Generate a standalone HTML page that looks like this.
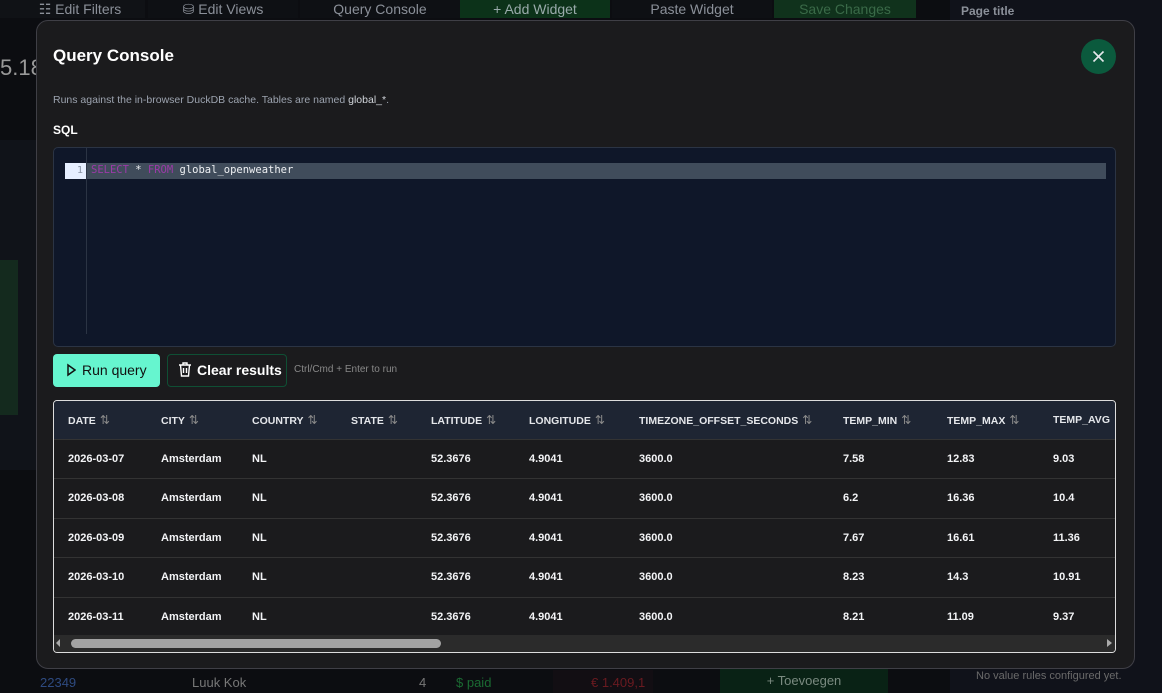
<!DOCTYPE html>
<html><head><style>
*{box-sizing:border-box;margin:0;padding:0}
body{width:1162px;height:693px;overflow:hidden;background:#0c0d11;font-family:"Liberation Sans",sans-serif;position:relative;color:#e5e7eb}
.abs{position:absolute}
.tb{top:0;height:18px;font-size:14px;color:#8b9099;line-height:18px;text-align:center}
.modal{left:36px;top:20px;width:1099px;height:649px;background:#1b1b1d;border:1px solid #3f3f46;border-radius:12px}
th,td{text-align:left;white-space:nowrap;font-size:11px;padding:0}
table{border-collapse:collapse;width:1062px;table-layout:fixed}
th{height:38px;background:#1e2533;color:#e5e7eb;font-weight:bold;font-size:10.5px}
td{height:39.5px;border-top:1px solid #333;color:#f3f4f6;font-weight:bold}
.s{color:#888;font-weight:normal;font-size:12px;margin-left:4px}
</style></head><body>
<div class="abs" style="left:0;top:0;width:145px;height:18px;background:#101216"></div>
<div class="abs tb" style="left:20px;width:120px">☷ Edit Filters</div>
<div class="abs tb" style="left:148px;width:150px;background:#0e1014">⛁ Edit Views</div>
<div class="abs tb" style="left:300px;width:160px;background:#0e1014">Query Console</div>
<div class="abs tb" style="left:460px;width:150px;background:#0c3219;color:#9aa">+ Add Widget</div>
<div class="abs tb" style="left:612px;width:160px;background:#0e1014">Paste Widget</div>
<div class="abs tb" style="left:774px;width:142px;background:#10321c;color:#3a6a48">Save Changes</div>
<div class="abs" style="left:950px;top:0;width:212px;height:693px;background:#10121a"></div>
<div class="abs" style="left:961px;top:4px;font-size:12px;color:#8b9099;font-weight:bold">Page title</div>
<div class="abs" style="left:0;top:55px;width:36px;font-size:22px;color:#999">5.18</div>
<div class="abs" style="left:0;top:140px;width:36px;height:330px;background:#101319"></div>
<div class="abs" style="left:0;top:260px;width:18px;height:155px;background:#142a1e"></div>
<div class="abs" style="left:40px;top:675px;font-size:13px;color:#2e4a80">22349</div>
<div class="abs" style="left:192px;top:675px;font-size:13px;color:#777">Luuk Kok</div>
<div class="abs" style="left:419px;top:675px;font-size:13px;color:#777">4</div>
<div class="abs" style="left:456px;top:675px;font-size:13px;color:#1a6a32">$ paid</div>
<div class="abs" style="left:553px;top:670px;width:100px;height:23px;background:#120e13;color:#6a1a20;font-size:13px;padding:5px 0 0 38px">€ 1.409,1</div>
<div class="abs" style="left:720px;top:669px;width:168px;height:24px;background:#092215;color:#7a8a80;font-size:13px;text-align:center;line-height:24px">+ Toevoegen</div>
<div class="abs" style="left:976px;top:670px;font-size:11px;color:#6a6a6a">No value rules configured yet.</div>
<div class="abs modal">
 <div class="abs" style="left:16px;top:25px;font-size:17px;font-weight:bold;color:#fff">Query Console</div>
 <div class="abs" style="left:1044px;top:18px;width:35px;height:35px;border-radius:50%;background:#0b5a3d">
  <svg width="35" height="35"><path d="M12.5 12.5L22.5 22.5M22.5 12.5L12.5 22.5" stroke="#e5e7eb" stroke-width="1.6"/></svg></div>
 <div class="abs" style="left:16px;top:73px;font-size:10.5px;color:#9ca3af">Runs against the in-browser DuckDB cache. Tables are named <span style="color:#d1d5db">global_*</span>.</div>
 <div class="abs" style="left:16px;top:102px;font-size:12px;font-weight:bold;color:#fff">SQL</div>
 <div class="abs" style="left:16px;top:126px;width:1063px;height:200px;background:#0f1729;border:1px solid #2b3444;border-radius:5px">
  <div class="abs" style="left:11px;top:15px;width:21px;height:16px;background:#e6efff;color:#8a95a5;font:10px 'DejaVu Sans Mono',monospace;text-align:right;padding:2px 3px 0 0">1</div>
  <div class="abs" style="left:32px;top:0;width:1px;height:186px;background:#2b3444"></div>
  <div class="abs" style="left:33px;top:15px;width:1019px;height:16px;background:#404c5b;font:10.5px 'DejaVu Sans Mono',monospace;padding:1px 0 0 4px;color:#eef0f3"><span style="color:#9b3aa8">SELECT</span> * <span style="color:#9b3aa8">FROM</span> global_openweather</div>
 </div>
 <div class="abs" style="left:16px;top:333px;width:107px;height:33px;background:#66f5cf;border-radius:4px;color:#111;font-size:14px;line-height:33px;padding-left:13px">
  <svg width="10" height="14" style="vertical-align:-2px;margin-right:6px"><path d="M2 2L9 7L2 12Z" fill="none" stroke="#111" stroke-width="1.5"/></svg>Run query</div>
 <div class="abs" style="left:130px;top:333px;width:120px;height:33px;border:1px solid #0f4f34;border-radius:4px;color:#fff;font-size:14px;font-weight:bold;line-height:31px;padding-left:10px">
  <svg width="14" height="15" style="vertical-align:-2px;margin-right:5px"><path d="M1 3H13M5 3V1H9V3M2.5 3L3.5 14H10.5L11.5 3M5.5 6V11M8.5 6V11" fill="none" stroke="#fff" stroke-width="1.4"/></svg>Clear results</div>
 <div class="abs" style="left:257px;top:343px;font-size:10px;color:#888">Ctrl/Cmd + Enter to run</div>
 <div class="abs" style="left:16px;top:379px;width:1063px;height:253px;border:1px solid #ddd;border-radius:4px;overflow:hidden;background:#1b1b1d">
  <table>
   <colgroup><col style="width:14px"><col style="width:93px"><col style="width:91px"><col style="width:99px"><col style="width:80px"><col style="width:98px"><col style="width:110px"><col style="width:204px"><col style="width:104px"><col style="width:106px"><col style="width:63px"></colgroup>
   <tr><th></th><th>DATE<span class="s">⇅</span></th><th>CITY<span class="s">⇅</span></th><th>COUNTRY<span class="s">⇅</span></th><th>STATE<span class="s">⇅</span></th><th>LATITUDE<span class="s">⇅</span></th><th>LONGITUDE<span class="s">⇅</span></th><th>TIMEZONE_OFFSET_SECONDS<span class="s">⇅</span></th><th>TEMP_MIN<span class="s">⇅</span></th><th>TEMP_MAX<span class="s">⇅</span></th><th>TEMP_AVG</th></tr>
   <tr><td></td><td>2026-03-07</td><td>Amsterdam</td><td>NL</td><td></td><td>52.3676</td><td>4.9041</td><td>3600.0</td><td>7.58</td><td>12.83</td><td>9.03</td></tr>
   <tr><td></td><td>2026-03-08</td><td>Amsterdam</td><td>NL</td><td></td><td>52.3676</td><td>4.9041</td><td>3600.0</td><td>6.2</td><td>16.36</td><td>10.4</td></tr>
   <tr><td></td><td>2026-03-09</td><td>Amsterdam</td><td>NL</td><td></td><td>52.3676</td><td>4.9041</td><td>3600.0</td><td>7.67</td><td>16.61</td><td>11.36</td></tr>
   <tr><td></td><td>2026-03-10</td><td>Amsterdam</td><td>NL</td><td></td><td>52.3676</td><td>4.9041</td><td>3600.0</td><td>8.23</td><td>14.3</td><td>10.91</td></tr>
   <tr><td></td><td>2026-03-11</td><td>Amsterdam</td><td>NL</td><td></td><td>52.3676</td><td>4.9041</td><td>3600.0</td><td>8.21</td><td>11.09</td><td>9.37</td></tr>
  </table>
  <div class="abs" style="left:0;bottom:0;width:1062px;height:17px;background:#2b2b2b">
   <div class="abs" style="left:2px;top:4px;width:0;height:0;border:4px solid transparent;border-right:4px solid #aaa;border-left:0"></div>
   <div class="abs" style="left:17px;top:4px;width:370px;height:9px;border-radius:5px;background:#a3a3a3"></div>
   <div class="abs" style="right:4px;top:4px;width:0;height:0;border:4px solid transparent;border-left:5px solid #aaa;border-right:0"></div>
  </div>
 </div>
</div>
</body></html>
